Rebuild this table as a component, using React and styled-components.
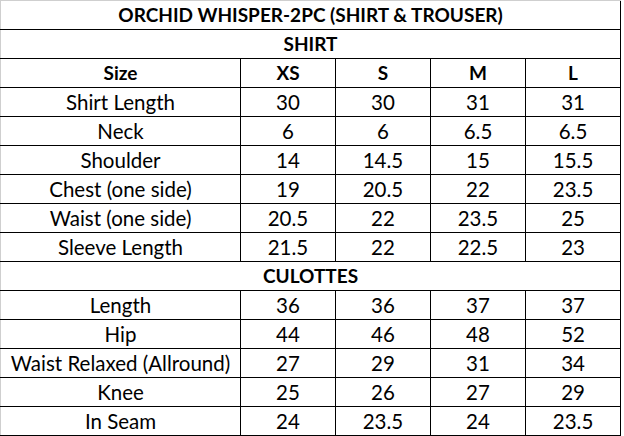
import React from "react";
import styled, { createGlobalStyle } from "styled-components";

const GlobalStyle = createGlobalStyle`
  html, body {
    margin: 0;
    padding: 0;
    background: #ffffff;
  }
  body {
    font-family: Lato, "Open Sans", sans-serif;
    color: #000000;
  }
`;

const shirtRows = [
  ["Shirt Length", "30", "30", "31", "31"],
  ["Neck", "6", "6", "6.5", "6.5"],
  ["Shoulder", "14", "14.5", "15", "15.5"],
  ["Chest (one side)", "19", "20.5", "22", "23.5"],
  ["Waist (one side)", "20.5", "22", "23.5", "25"],
  ["Sleeve Length", "21.5", "22", "22.5", "23"],
];

const culotteRows = [
  ["Length", "36", "36", "37", "37"],
  ["Hip", "44", "46", "48", "52"],
  ["Waist Relaxed (Allround)", "27", "29", "31", "34"],
  ["Knee", "25", "26", "27", "29"],
  ["In Seam", "24", "23.5", "24", "23.5"],
];

const sizes = ["XS", "S", "M", "L"];

const Chart = () => {
  return (
    <Table>
      <colgroup>
        <col style={{ width: 240 }} />
        <col style={{ width: 95 }} />
        <col style={{ width: 95 }} />
        <col style={{ width: 95 }} />
        <col style={{ width: 95 }} />
      </colgroup>
      <tbody>
        <Row>
          <Title colSpan={5} $top>
            ORCHID WHISPER-2PC (SHIRT &amp; TROUSER)
          </Title>
        </Row>
        <Row>
          <Title colSpan={5}>SHIRT</Title>
        </Row>
        <Row>
          <Cell $bold>Size</Cell>
          {sizes.map((s) => (
            <Cell key={s} $bold>
              {s}
            </Cell>
          ))}
        </Row>
        {shirtRows.map((r) => (
          <Row key={r[0]}>
            {r.map((v, i) => (
              <Cell key={i}>{v}</Cell>
            ))}
          </Row>
        ))}
        <Row>
          <Title colSpan={5}>CULOTTES</Title>
        </Row>
        {culotteRows.map((r) => (
          <Row key={r[0]}>
            {r.map((v, i) => (
              <Cell key={i}>{v}</Cell>
            ))}
          </Row>
        ))}
      </tbody>
    </Table>
  );
};

const App = () => (
  <>
    <GlobalStyle />
    <Chart />
  </>
);

const Table = styled.table`
  border-collapse: collapse;
  table-layout: fixed;
  width: 620px;
  border-left: 1px solid #cfcfcf;
  border-right: 1px solid #000;
`;

const Row = styled.tr`
  height: 29px;
`;

const Cell = styled.td`
  border: 1px solid #000;
  border-top: none;
  padding: 0;
  text-align: center;
  vertical-align: middle;
  font-size: ${(p) => (p.$bold ? "19px" : "20.5px")};
  line-height: 28px;
  font-weight: ${(p) => (p.$bold ? 700 : 400)};
  white-space: nowrap;
  &:first-child {
    border-left-color: #cfcfcf;
  }
`;

const Title = styled.td`
  border-bottom: 1px solid #000;
  border-top: ${(p) => (p.$top ? "1px solid #cfcfcf" : "none")};
  padding: 0;
  text-align: center;
  font-size: 19px;
  line-height: 28px;
  font-weight: 700;
  white-space: nowrap;
`;

export default App;
